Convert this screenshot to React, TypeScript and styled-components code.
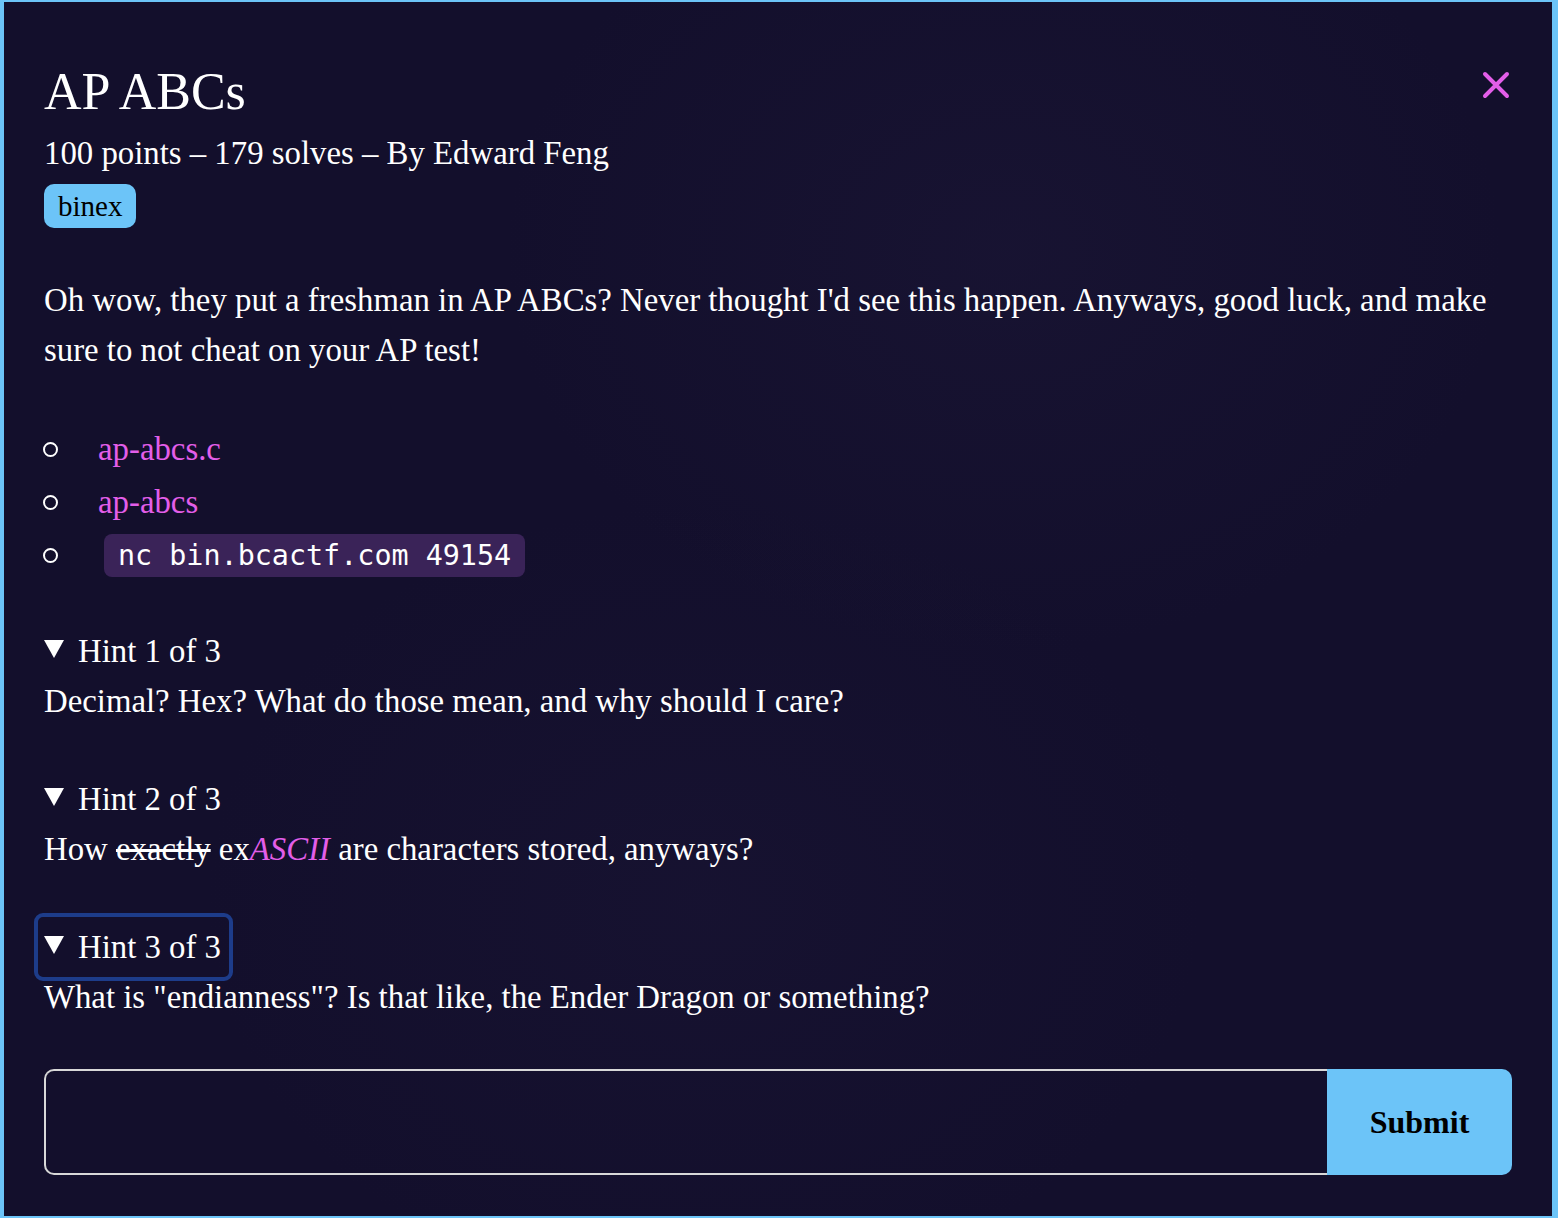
import React from "react";
import styled, { createGlobalStyle } from "styled-components";

const Global = createGlobalStyle`
  html, body { margin: 0; padding: 0; background: #6cc4f8; }
  body { font-family: "Liberation Serif", "Times New Roman", serif; }
  * { box-sizing: border-box; }
`;

const Frame = styled.div`
  width: 1558px;
  height: 1218px;
  padding: 2px 6px 2px 4px;
  background: #6cc4f8;
`;

const Dialog = styled.div`
  position: relative;
  height: 100%;
  background:
    radial-gradient(ellipse 500px 400px at 1000px 250px, rgba(40, 34, 70, 0.22), transparent),
    radial-gradient(ellipse 500px 400px at 700px 900px, rgba(36, 30, 66, 0.2), transparent),
    #130f2c;
  padding: 58px 40px 0 40px;
  color: #fff;
  display: flex;
  flex-direction: column;
`;

const Close = styled.button`
  position: absolute;
  top: 67px;
  right: 40px;
  width: 32px;
  height: 32px;
  padding: 0;
  border: 0;
  background: transparent;
  cursor: pointer;
  display: flex;
  align-items: center;
  justify-content: center;
`;

const Title = styled.h1`
  margin: 0;
  font-size: 52px;
  font-weight: 400;
  line-height: 64px;
  letter-spacing: 0;
`;

const Meta = styled.div`
  font-size: 32.8px;
  line-height: 44px;
  margin-top: 7px;
`;

const Tag = styled.span`
  align-self: flex-start;
  margin-top: 9px;
  background: #6cc4f8;
  color: #000;
  border-radius: 10px;
  font-size: 29px;
  line-height: 44px;
  height: 44px;
  padding: 0 14px;
`;

const Paragraph = styled.p`
  margin: 47px 0 0 0;
  font-size: 32.8px;
  line-height: 50px;
`;

const List = styled.ul`
  margin: 48px 0 0 0;
  padding: 0;
  list-style: none;
  font-size: 32.8px;
  line-height: 53px;
`;

const Item = styled.li`
  display: flex;
  align-items: center;
  min-height: 53px;
  &::before {
    content: "";
    width: 11px;
    height: 11px;
    border: 2.5px solid #fff;
    border-radius: 50%;
    margin: 0 40px 0 -1px;
    flex: none;
  }
`;

const Link = styled.a`
  color: #e35ee9;
  text-decoration: none;
`;

const Code = styled.code`
  display: inline-block;
  margin-left: 6px;
  background: #3a2358;
  border-radius: 8px;
  font-family: "DejaVu Sans Mono", monospace;
  font-size: 28.4px;
  line-height: 43px;
  padding: 0 14px;
`;

const Hints = styled.div`
  margin-top: 44px;
  display: flex;
  flex-direction: column;
  gap: 48px;
`;

const Hint = styled.details`
  font-size: 32.8px;
  line-height: 50px;
`;

const Summary = styled.summary<{ $focused?: boolean }>`
  display: flex;
  align-items: center;
  width: fit-content;
  list-style: none;
  cursor: pointer;
  border-radius: 5px;
  outline: ${(p) => (p.$focused ? "4px solid #1d3c8a" : "none")};
  outline-offset: 0;
  height: 60px;
  margin: -5px 0 -5px -6px;
  padding: 0 8px 0 6px;
  &::-webkit-details-marker { display: none; }
`;

const Arrow = styled.span`
  display: inline-block;
  width: 0;
  height: 0;
  border-left: 10px solid transparent;
  border-right: 10px solid transparent;
  border-top: 18px solid #fff;
  margin-right: 14px;
  margin-top: -4px;
`;

const HintBody = styled.div``;

const Strike = styled.s``;

const Em = styled.em`
  color: #e35ee9;
`;

const Form = styled.form`
  margin-top: 47px;
  display: flex;
  height: 106px;
  width: 1468px;
`;

const Input = styled.input`
  flex: 1;
  background: transparent;
  border: 2px solid #d8d8d8;
  border-right: 0;
  border-radius: 10px 0 0 10px;
  color: #fff;
  font-size: 30px;
  padding: 0 20px;
  outline: none;
`;

const Submit = styled.button`
  width: 185px;
  border: 0;
  background: #6cc4f8;
  border-radius: 0 10px 10px 0;
  font-family: "Liberation Serif", "Times New Roman", serif;
  font-weight: 700;
  font-size: 32px;
  color: #000;
  cursor: pointer;
`;

export default function App() {
  return (
    <Frame>
      <Global />
      <Dialog>
        <Close aria-label="Close">
          <svg width="28" height="28" viewBox="0 0 28 28">
            <path d="M3 3 L25 25 M25 3 L3 25" stroke="#e35ee9" strokeWidth="4" strokeLinecap="round" />
          </svg>
        </Close>
        <Title>AP ABCs</Title>
        <Meta>100 points – 179 solves – By Edward Feng</Meta>
        <Tag>binex</Tag>
        <Paragraph>
          Oh wow, they put a freshman in AP ABCs? Never thought I'd see this happen. Anyways, good luck, and make sure to
          not cheat on your AP test!
        </Paragraph>
        <List>
          <Item>
            <Link href="#">ap-abcs.c</Link>
          </Item>
          <Item>
            <Link href="#">ap-abcs</Link>
          </Item>
          <Item>
            <Code>nc bin.bcactf.com 49154</Code>
          </Item>
        </List>
        <Hints>
          <Hint open>
            <Summary>
              <Arrow />
              Hint 1 of 3
            </Summary>
            <HintBody>Decimal? Hex? What do those mean, and why should I care?</HintBody>
          </Hint>
          <Hint open>
            <Summary>
              <Arrow />
              Hint 2 of 3
            </Summary>
            <HintBody>
              How <Strike>exactly</Strike> ex<Em>ASCII</Em> are characters stored, anyways?
            </HintBody>
          </Hint>
          <Hint open>
            <Summary $focused>
              <Arrow />
              Hint 3 of 3
            </Summary>
            <HintBody>What is "endianness"? Is that like, the Ender Dragon or something?</HintBody>
          </Hint>
        </Hints>
        <Form onSubmit={(e) => e.preventDefault()}>
          <Input type="text" />
          <Submit type="submit">Submit</Submit>
        </Form>
      </Dialog>
    </Frame>
  );
}
